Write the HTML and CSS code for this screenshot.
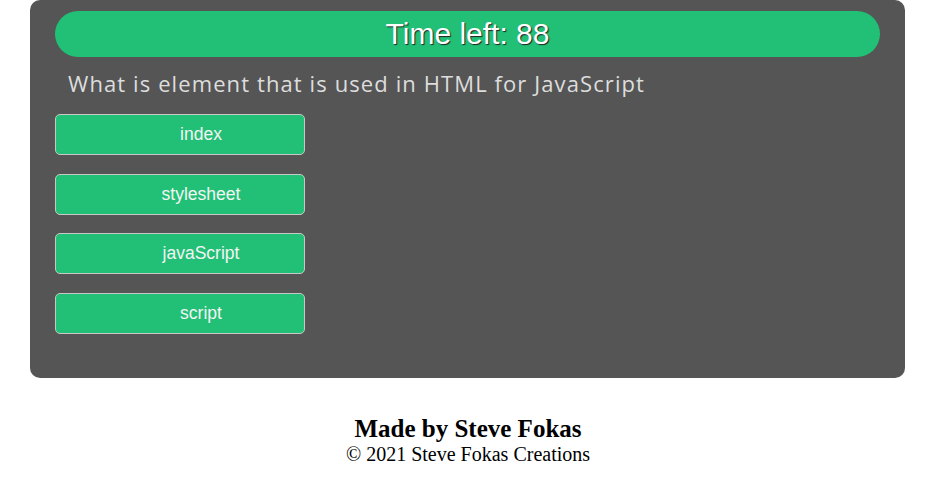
FILE: index.html
```html
<!DOCTYPE html>
<html lang="en">
<head>
<meta charset="utf-8">
<title>Quiz</title>
<link rel="stylesheet" href="styles.css">
</head>
<body>
<main class="quiz">
  <div class="timer">Time left: 88</div>
  <h2 class="question">What is element that is used in HTML for JavaScript</h2>
  <div class="answers">
    <button class="answer">index</button>
    <button class="answer">stylesheet</button>
    <button class="answer">javaScript</button>
    <button class="answer">script</button>
  </div>
</main>
<footer class="footer">
  <h3 class="footer-title">Made by Steve Fokas</h3>
  <p class="footer-copy">&copy; 2021 Steve Fokas Creations</p>
</footer>
</body>
</html>
```
FILE: styles.css
```css
html, body {
  margin: 0;
  padding: 0;
  background: #ffffff;
}

.quiz {
  margin: 0 31px 0 30px;
  box-sizing: border-box;
  background: #555555;
  border-radius: 10px;
  padding: 11px 25px 44px;
  height: 378px;
}

.timer {
  height: 46px;
  border-radius: 23px;
  background: #21c076;
  color: #ffffff;
  font-family: "Liberation Sans", Arial, sans-serif;
  font-size: 30px;
  line-height: 45px;
  text-align: center;
  text-shadow: 1px 1px 1px #222;
}

.question {
  margin: 11px 0 0 13px;
  font-family: "Open Sans", sans-serif;
  font-weight: 400;
  font-size: 22px;
  letter-spacing: 1.1px;
  line-height: 30px;
  color: #dddddd;
}

.answers {
  display: flex;
  flex-direction: column;
  gap: 18.6px;
  margin-top: 16px;
}

.answer {
  width: 250px;
  height: 41px;
  box-sizing: border-box;
  background: #21c076;
  border: 1px solid #c8c8c8;
  border-radius: 5px;
  color: #f4f4f4;
  font-family: "Liberation Sans", Arial, sans-serif;
  font-size: 17.5px;
  text-align: center;
  padding: 0 0 0 42px;
}

.footer {
  text-align: center;
  font-family: "Liberation Serif", "Times New Roman", serif;
  color: #000;
  padding-top: 36px;
}

.footer-title {
  margin: 0;
  font-size: 25px;
  line-height: 29px;
  font-weight: bold;
}

.footer-copy {
  margin: 0;
  font-size: 20px;
  line-height: 23px;
}
```
